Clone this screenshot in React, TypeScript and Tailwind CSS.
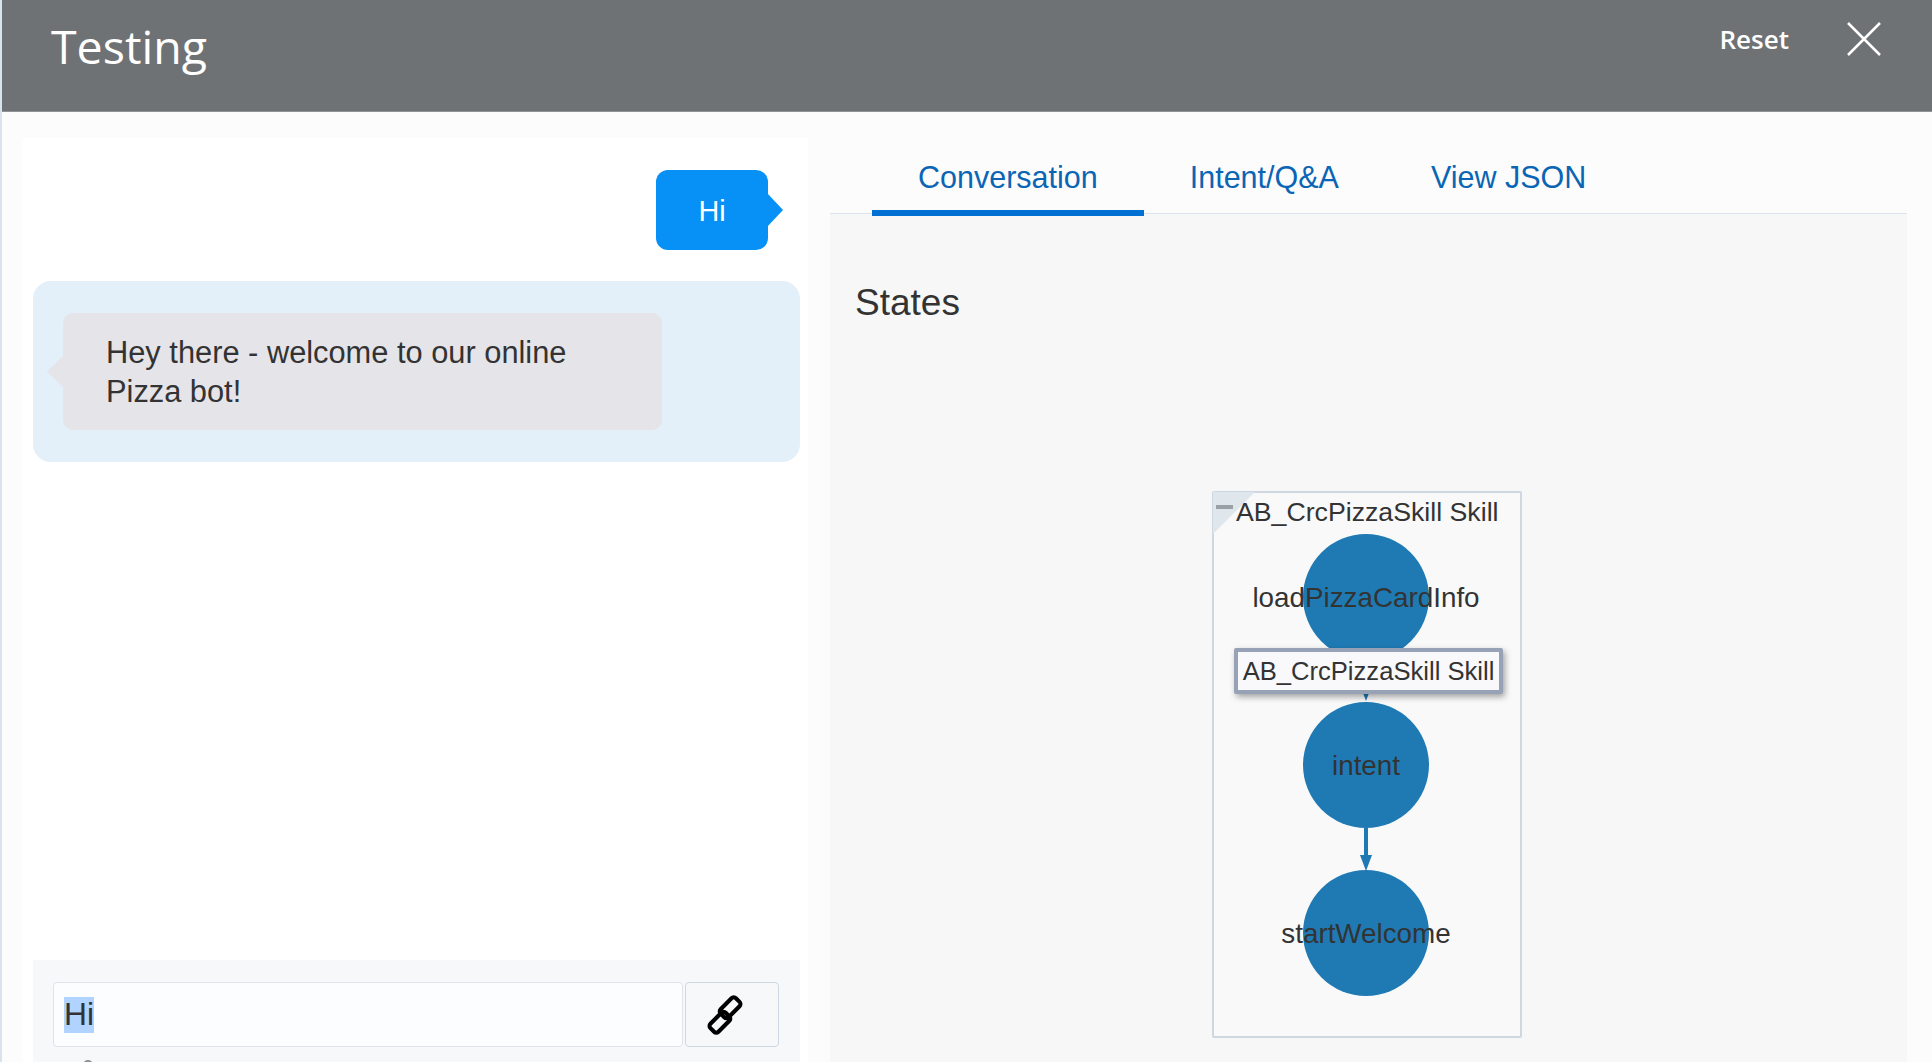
const font = "font-['Liberation_Sans',Arial,sans-serif]";

function Node({ label, top }: { label: string; top: number }) {
  return (
    <div
      className="absolute left-[89px] flex h-[126px] w-[126px] items-center justify-center rounded-full bg-[#1f7ab4] pt-[1px]"
      style={{ top }}
    >
      <span className="whitespace-nowrap text-[27.8px] text-[#333333]">{label}</span>
    </div>
  );
}

function LinkIcon() {
  return (
    <svg className="overflow-visible" width="36" height="36" viewBox="0 0 35 35" fill="none" stroke="#000000" strokeWidth="4">
      <g transform="rotate(-45 17.5 17.5)">
        <rect x="-1.5" y="13.5" width="21" height="11" rx="3" />
        <rect x="15.5" y="10.5" width="21" height="11" rx="3" />
      </g>
    </svg>
  );
}

function Diagram() {
  return (
    <div className="relative h-[547px] w-[310px] rounded-[2px] border-2 border-[#cfd8e0] bg-[#f9f9fa]">
      {/* collapse corner */}
      <svg className="absolute -left-[2px] -top-[2px]" width="45" height="45" viewBox="0 0 45 45">
        <path d="M1 1H43L1 43Z" fill="#dfe6ec" />
        <rect x="4" y="14" width="17" height="4" fill="#9ba1a6" />
      </svg>
      <div className="absolute left-[22px] top-[3px] whitespace-nowrap text-[26.7px] leading-[32px] text-[#333333]">
        AB_CrcPizzaSkill Skill
      </div>

      <Node label="loadPizzaCardInfo" top={41} />
      <Node label="intent" top={209} />
      <Node label="startWelcome" top={377} />

      {/* edges */}
      <svg className="absolute left-[142px] top-[199px]" width="20" height="12" viewBox="0 0 20 12">
        <path d="M7 1H13L10 9Z" fill="#1f7ab4" />
      </svg>
      <svg className="absolute left-[142px] top-[335px]" width="20" height="44" viewBox="0 0 20 44">
        <rect x="8" y="0" width="4" height="29" fill="#1f7ab4" />
        <path d="M4 27H16L10 43Z" fill="#1f7ab4" />
      </svg>

      {/* tooltip */}
      <div className="absolute left-[20px] top-[155px] flex h-[46px] w-[269px] items-center justify-center rounded-[2px] border-4 border-[#98a2b6] bg-[#f9f9fb] text-[25.6px] text-[#333333] shadow-[2px_3px_6px_rgba(0,0,0,0.35)]">
        <span className="whitespace-nowrap">AB_CrcPizzaSkill Skill</span>
      </div>
    </div>
  );
}

export default function App() {
  return (
    <div className={`${font} flex h-[1062px] w-[1932px] flex-col overflow-hidden border-l-2 border-[#d9e3ee] bg-[#fcfcfc]`}>
      {/* HEADER */}
      <header className="flex h-[112px] shrink-0 items-start justify-between border-b border-[#8f9296] bg-[#6f7275] pl-[49px] pr-[51px] text-white">
        <h1 className="mt-[13px] font-['Open_Sans',sans-serif] text-[46.5px] leading-[66px]">Testing</h1>
        <div className="mt-[20px] flex items-center gap-[58px]">
          <button className="font-['Open_Sans',sans-serif] text-[26px] font-semibold leading-[38px]">Reset</button>
          <svg width="34" height="34" viewBox="0 0 34 34" fill="none" stroke="#ffffff" strokeWidth="2.5">
            <path d="M1 1L33 33M33 1L1 33" />
          </svg>
        </div>
      </header>

      <main className="flex min-h-0 flex-1 pl-5">
        {/* CHAT */}
        <section className="mt-[26px] flex w-[786px] flex-col bg-white">
          <div className="flex justify-end pr-[40px] pt-[32px]">
            <div className="relative flex h-[80px] w-[112px] items-center justify-center rounded-[12px] bg-[#0790f5] pt-[3px] text-[28.8px] text-white">
              Hi
              <span className="absolute -right-[15px] top-[23px] h-[34px] w-[16px] bg-[#0790f5] [clip-path:polygon(0_0,100%_50%,0_100%)]" />
            </div>
          </div>

          <div className="ml-[11px] mr-[8px] mt-[31px] h-[181px] rounded-[18px] bg-[#e3eff9] pl-[30px] pt-[32px]">
            <div className="relative flex h-[117px] w-[599px] items-center rounded-[10px] bg-[#e5e4e9] pl-[43px] pt-[2px] text-[30.8px] leading-[38.5px] text-[#333333]">
              <p>
                Hey there - welcome to our online
                <br />
                Pizza bot!
              </p>
              <span className="absolute -left-[16px] top-[43px] h-[31px] w-[16px] bg-[#e5e4e9] [clip-path:polygon(100%_0,0_50%,100%_100%)]" />
            </div>
          </div>

          {/* INPUT */}
          <div className="relative ml-[11px] mr-[8px] mt-auto h-[102px] bg-[#f7f8fa] pl-[20px] pt-[22px]">
            <div className="flex h-[65px] gap-[2px]">
              <div className="flex w-[630px] items-center rounded-[4px] border border-[#dfe4ea] bg-[#fcfdfe] pl-[10px] text-[31.8px] text-[#333333]">
                <span className="flex h-[36px] items-center bg-[#b0d4ff]">Hi</span>
              </div>
              <button className="flex w-[94px] items-center justify-center rounded-[4px] border border-[#cdd8e3] bg-[#f7f8fa] pr-[15px]">
                <LinkIcon />
              </button>
            </div>
            <span className="absolute left-[50px] top-[100px] h-[10px] w-[10px] rounded-full bg-[#8f8f8f]" />
          </div>
        </section>

        {/* DETAILS */}
        <section className="ml-[22px] flex w-[1077px] flex-col">
          <nav className="flex h-[102px] shrink-0 items-end border-b border-[#dbe3ec] pl-[42px] text-[30.5px] text-[#0a65b5]">
            <a className="relative -mb-[3px] flex h-[74px] items-start border-b-[6px] border-[#0070d2] px-[46px] pt-[13px] text-[#0a65b5]">
              Conversation
            </a>
            <a className="-mb-[3px] flex h-[74px] items-start px-[46px] pt-[13px]">Intent/Q&amp;A</a>
            <a className="-mb-[3px] flex h-[74px] items-start px-[46px] pt-[13px]">View JSON</a>
          </nav>
          <div className="min-h-0 flex-1 bg-[#f7f7f7] pl-[25px] pt-[63px]">
            <h2 className="text-[37px] leading-[52px] text-[#333333]">States</h2>
            <div className="ml-[357px] mt-[162px]">
              <Diagram />
            </div>
          </div>
        </section>
      </main>
    </div>
  );
}
